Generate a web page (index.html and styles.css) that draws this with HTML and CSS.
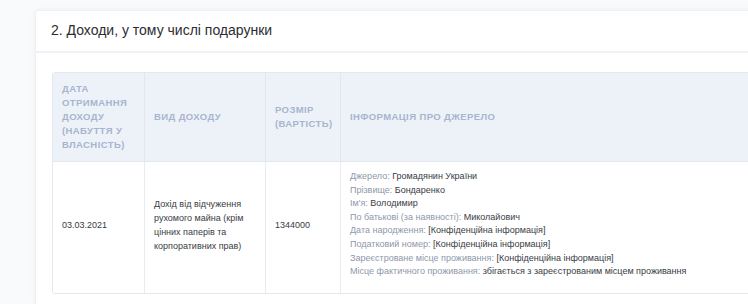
FILE: index.html
```html
<!DOCTYPE html>
<html lang="uk">
<head>
<meta charset="utf-8">
<link rel="stylesheet" href="styles.css">
</head>
<body>
<section class="card">
  <header class="card-head">
    <h2 class="title">2. Доходи, у тому числі подарунки</h2>
  </header>
  <div class="card-body">
    <table class="tbl">
      <thead>
        <tr>
          <th class="c1">Дата отримання доходу (набуття у власність)</th>
          <th class="c2">Вид доходу</th>
          <th class="c3">Розмір (вартість)</th>
          <th class="c4">Інформація про джерело</th>
        </tr>
      </thead>
      <tbody>
        <tr>
          <td class="mid">03.03.2021</td>
          <td class="mid">Дохід від відчуження рухомого майна (крім цінних паперів та корпоративних прав)</td>
          <td class="mid">1344000</td>
          <td class="info">
            <div><span class="lbl">Джерело:</span> Громадянин України</div>
            <div><span class="lbl">Прізвище:</span> Бондаренко</div>
            <div><span class="lbl">Ім'я:</span> Володимир</div>
            <div><span class="lbl">По батькові (за наявності):</span> Миколайович</div>
            <div><span class="lbl">Дата народження:</span> [Конфіденційна інформація]</div>
            <div><span class="lbl">Податковий номер:</span> [Конфіденційна інформація]</div>
            <div><span class="lbl">Зареєстроване місце проживання:</span> [Конфіденційна інформація]</div>
            <div><span class="lbl">Місце фактичного проживання:</span> збігається з зареєстрованим місцем проживання</div>
          </td>
        </tr>
      </tbody>
    </table>
  </div>
</section>
</body>
</html>
```

FILE: styles.css
```css
html, body {
  margin: 0;
  padding: 0;
  background: #f9fafc;
  overflow: hidden;
  font-family: "Liberation Sans", Arial, sans-serif;
}
body {
  padding: 10px 0 0 35px;
}
.card {
  width: 780px;
  background: #fff;
  border: 1px solid #eef0f4;
  border-radius: 3px;
  box-shadow: 0 0 6px rgba(30, 40, 70, 0.05);
}
.card-head {
  height: 40px;
  display: flex;
  align-items: center;
  padding: 0 15px;
  border-bottom: 2px solid #f0f2f6;
}
.title {
  margin: 0 0 2px;
  font-size: 14px;
  font-weight: normal;
  color: #2a2d33;
}
.card-body {
  padding: 19px 0 12px 16px;
}
.tbl {
  width: 770px;
  border-collapse: separate;
  border-spacing: 0;
  border: 1px solid #e4e8ee;
  border-radius: 3px;
  font-size: 9px;
  color: #333;
  table-layout: fixed;
}
.c1 { width: 73px; }
.c2 { width: 102px; }
.c3 { width: 56px; }
.tbl th {
  background: #edf2f8;
  color: #a7b5cf;
  font-weight: bold;
  text-transform: uppercase;
  text-align: left;
  font-size: 9.5px;
  letter-spacing: 0.4px;
  line-height: 14px;
  padding: 9px;
  border-right: 1px solid #e2e7ee;
  border-bottom: 1px solid #e2e7ee;
  vertical-align: middle;
}
.tbl th:first-child { border-top-left-radius: 3px; }
.tbl td {
  padding: 9px;
  line-height: 14px;
  border-right: 1px solid #e8ebf0;
  vertical-align: middle;
  color: #383c44;
}
.tbl td.mid { padding-bottom: 13px; }
.tbl th:last-child, .tbl td:last-child { border-right: none; }
.tbl td.info { line-height: 13.6px; padding-top: 8px; padding-bottom: 14px; }
.lbl {
  color: #8e98aa;
}
```
